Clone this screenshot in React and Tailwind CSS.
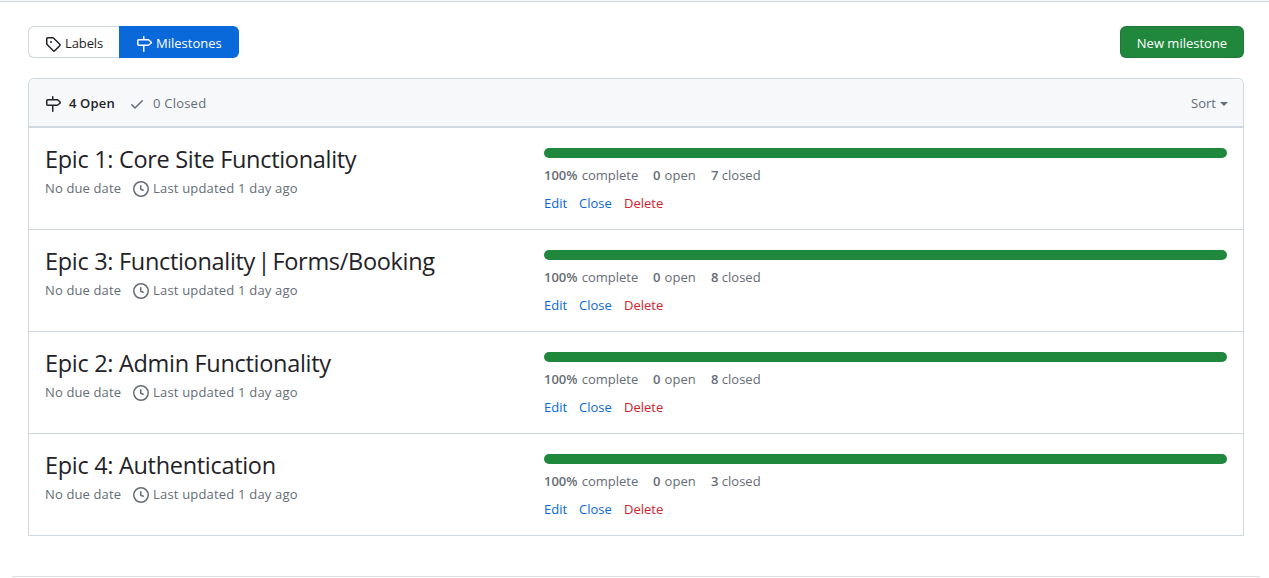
import React from "react";

const PATHS = {
  tag: "M1 7.775V2.75C1 1.784 1.784 1 2.75 1h5.025c.464 0 .91.184 1.238.513l6.25 6.25a1.75 1.75 0 0 1 0 2.474l-5.026 5.026a1.75 1.75 0 0 1-2.474 0l-6.25-6.25A1.752 1.752 0 0 1 1 7.775Zm1.5 0c0 .066.026.13.073.177l6.25 6.25a.25.25 0 0 0 .354 0l5.025-5.025a.25.25 0 0 0 0-.354l-6.25-6.25a.25.25 0 0 0-.177-.073H2.75a.25.25 0 0 0-.25.25ZM6 5a1 1 0 1 1 0 2 1 1 0 0 1 0-2Z",
  milestone:
    "M7.75 0a.75.75 0 0 1 .75.75V3h3.634c.414 0 .814.147 1.13.414l2.07 1.75a1.75 1.75 0 0 1 0 2.672l-2.07 1.75a1.75 1.75 0 0 1-1.13.414H8.5v5.25a.75.75 0 0 1-1.5 0V10H2.75A1.75 1.75 0 0 1 1 8.25v-3.5C1 3.784 1.784 3 2.75 3H7V.75A.75.75 0 0 1 7.75 0Zm4.384 8.5a.25.25 0 0 0 .161-.06l2.07-1.75a.248.248 0 0 0 0-.38l-2.07-1.75a.25.25 0 0 0-.161-.06H2.75a.25.25 0 0 0-.25.25v3.5c0 .138.112.25.25.25h9.384Z",
  check:
    "M13.78 4.22a.75.75 0 0 1 0 1.06l-7.25 7.25a.75.75 0 0 1-1.06 0L2.22 9.28a.751.751 0 0 1 .018-1.042.751.751 0 0 1 1.042-.018L6 10.94l6.72-6.72a.75.75 0 0 1 1.06 0Z",
  clock:
    "M8 0a8 8 0 1 1 0 16A8 8 0 0 1 8 0ZM1.5 8a6.5 6.5 0 1 0 13 0 6.5 6.5 0 0 0-13 0Zm7-3.25v2.992l2.028.812a.75.75 0 0 1-.557 1.392l-2.5-1A.751.751 0 0 1 7 8.25v-3.5a.75.75 0 0 1 1.5 0Z",
};

function Icon({ name, className = "" }) {
  return (
    <svg viewBox="0 0 16 16" className={`mt-0.5 size-4 shrink-0 ${className}`} fill="currentColor" aria-hidden="true">
      <path d={PATHS[name]} />
    </svg>
  );
}

const MILESTONES = [
  { title: "Epic 1: Core Site Functionality", closed: 7 },
  { title: <>Epic 3: Functionality<span className="[word-spacing:-3.4px]"> | </span>Forms/Booking</>, closed: 8 },
  { title: "Epic 2: Admin Functionality", closed: 8 },
  { title: "Epic 4: Authentication", closed: 3 },
];

function MilestoneRow({ title, closed }) {
  return (
    <li className="flex h-[102px] border-b border-[#d0d7de] px-4">
      <div className="w-[499px] shrink-0 pt-[15px]">
        <h2 className="mb-px h-8 text-[23.5px] leading-8 font-normal tracking-[-0.31px] text-[#1f2328]">{title}</h2>
        <div className="flex h-6 items-center">
          <span className="w-[88px] tracking-[0.13px]">No due date</span>
          <Icon name="clock" />
          <span className="ml-1 tracking-[0.19px]">Last updated 1 day ago</span>
        </div>
      </div>
      <div className="flex-1 pt-5">
        <div className="h-2.5 rounded-full bg-[#1f883d]" />
        <div className="mt-[7px] flex h-5 items-center">
          <span className="w-[109px] [word-spacing:0.8px]"><b className="font-semibold">100%</b> complete</span>
          <span className="w-[58px] [word-spacing:0.8px]"><b className="font-semibold">0</b> open</span>
          <span><b className="font-semibold">{closed}</b> closed</span>
        </div>
        <div className="mt-2 flex h-5 items-center text-[#0969da]">
          <a className="w-[35px]">Edit</a>
          <a className="w-[45px]">Close</a>
          <a className="text-[#cf222e]">Delete</a>
        </div>
      </div>
    </li>
  );
}

export default function App() {
  return (
    <div className="h-[578px] overflow-hidden bg-white font-['Open_Sans','Noto_Sans',sans-serif] text-[13px] leading-5 whitespace-nowrap text-[#656d76]">
      <div className="h-0.5 border-b border-[#d0d7de] bg-[#f6f8fa]" />
      <main className="pt-6 pr-[25px] pl-7">
        <div className="flex h-8 justify-between">
          <nav className="flex">
            <a className="flex w-[91px] items-center gap-1 rounded-l-md border border-r-0 border-[#d0d7de] pt-0.5 pl-4 text-[#1f2328]">
              <Icon name="tag" />
              <span className="tracking-[-0.1px]">Labels</span>
            </a>
            <a className="flex w-[120px] items-center gap-1 rounded-r-md bg-[#0969da] pt-0.5 pl-[17px] text-white">
              <Icon name="milestone" />
              <span>Milestones</span>
            </a>
          </nav>
          <button className="w-[124px] rounded-md border border-[#1f2328]/15 bg-[#1f883d] pt-0.5 text-white">
            New milestone
          </button>
        </div>
        <section className="mt-5 rounded-t-md border border-b-0 border-[#d0d7de]">
          <header className="flex h-[49px] items-center rounded-t-[5px] border-b-2 border-[#d0d7de] bg-[#f6f8fa] px-4">
            <Icon name="milestone" className="text-[#1f2328]" />
            <span className="ml-2 w-[60px] font-semibold tracking-[0.15px] text-[#1f2328]">4 Open</span>
            <Icon name="check" />
            <span className="ml-2 tracking-[0.22px]">0 Closed</span>
            <span className="-mr-px ml-auto flex items-center gap-1">
              Sort
              <span className="mt-0.5 border-x-4 border-t-4 border-x-transparent border-t-current" />
            </span>
          </header>
          <ul>
            {MILESTONES.map((m, i) => (
              <MilestoneRow key={i} {...m} />
            ))}
          </ul>
        </section>
      </main>
      <div className="mt-10 mr-[9px] ml-3 border-t border-[#d8dee4]" />
    </div>
  );
}
